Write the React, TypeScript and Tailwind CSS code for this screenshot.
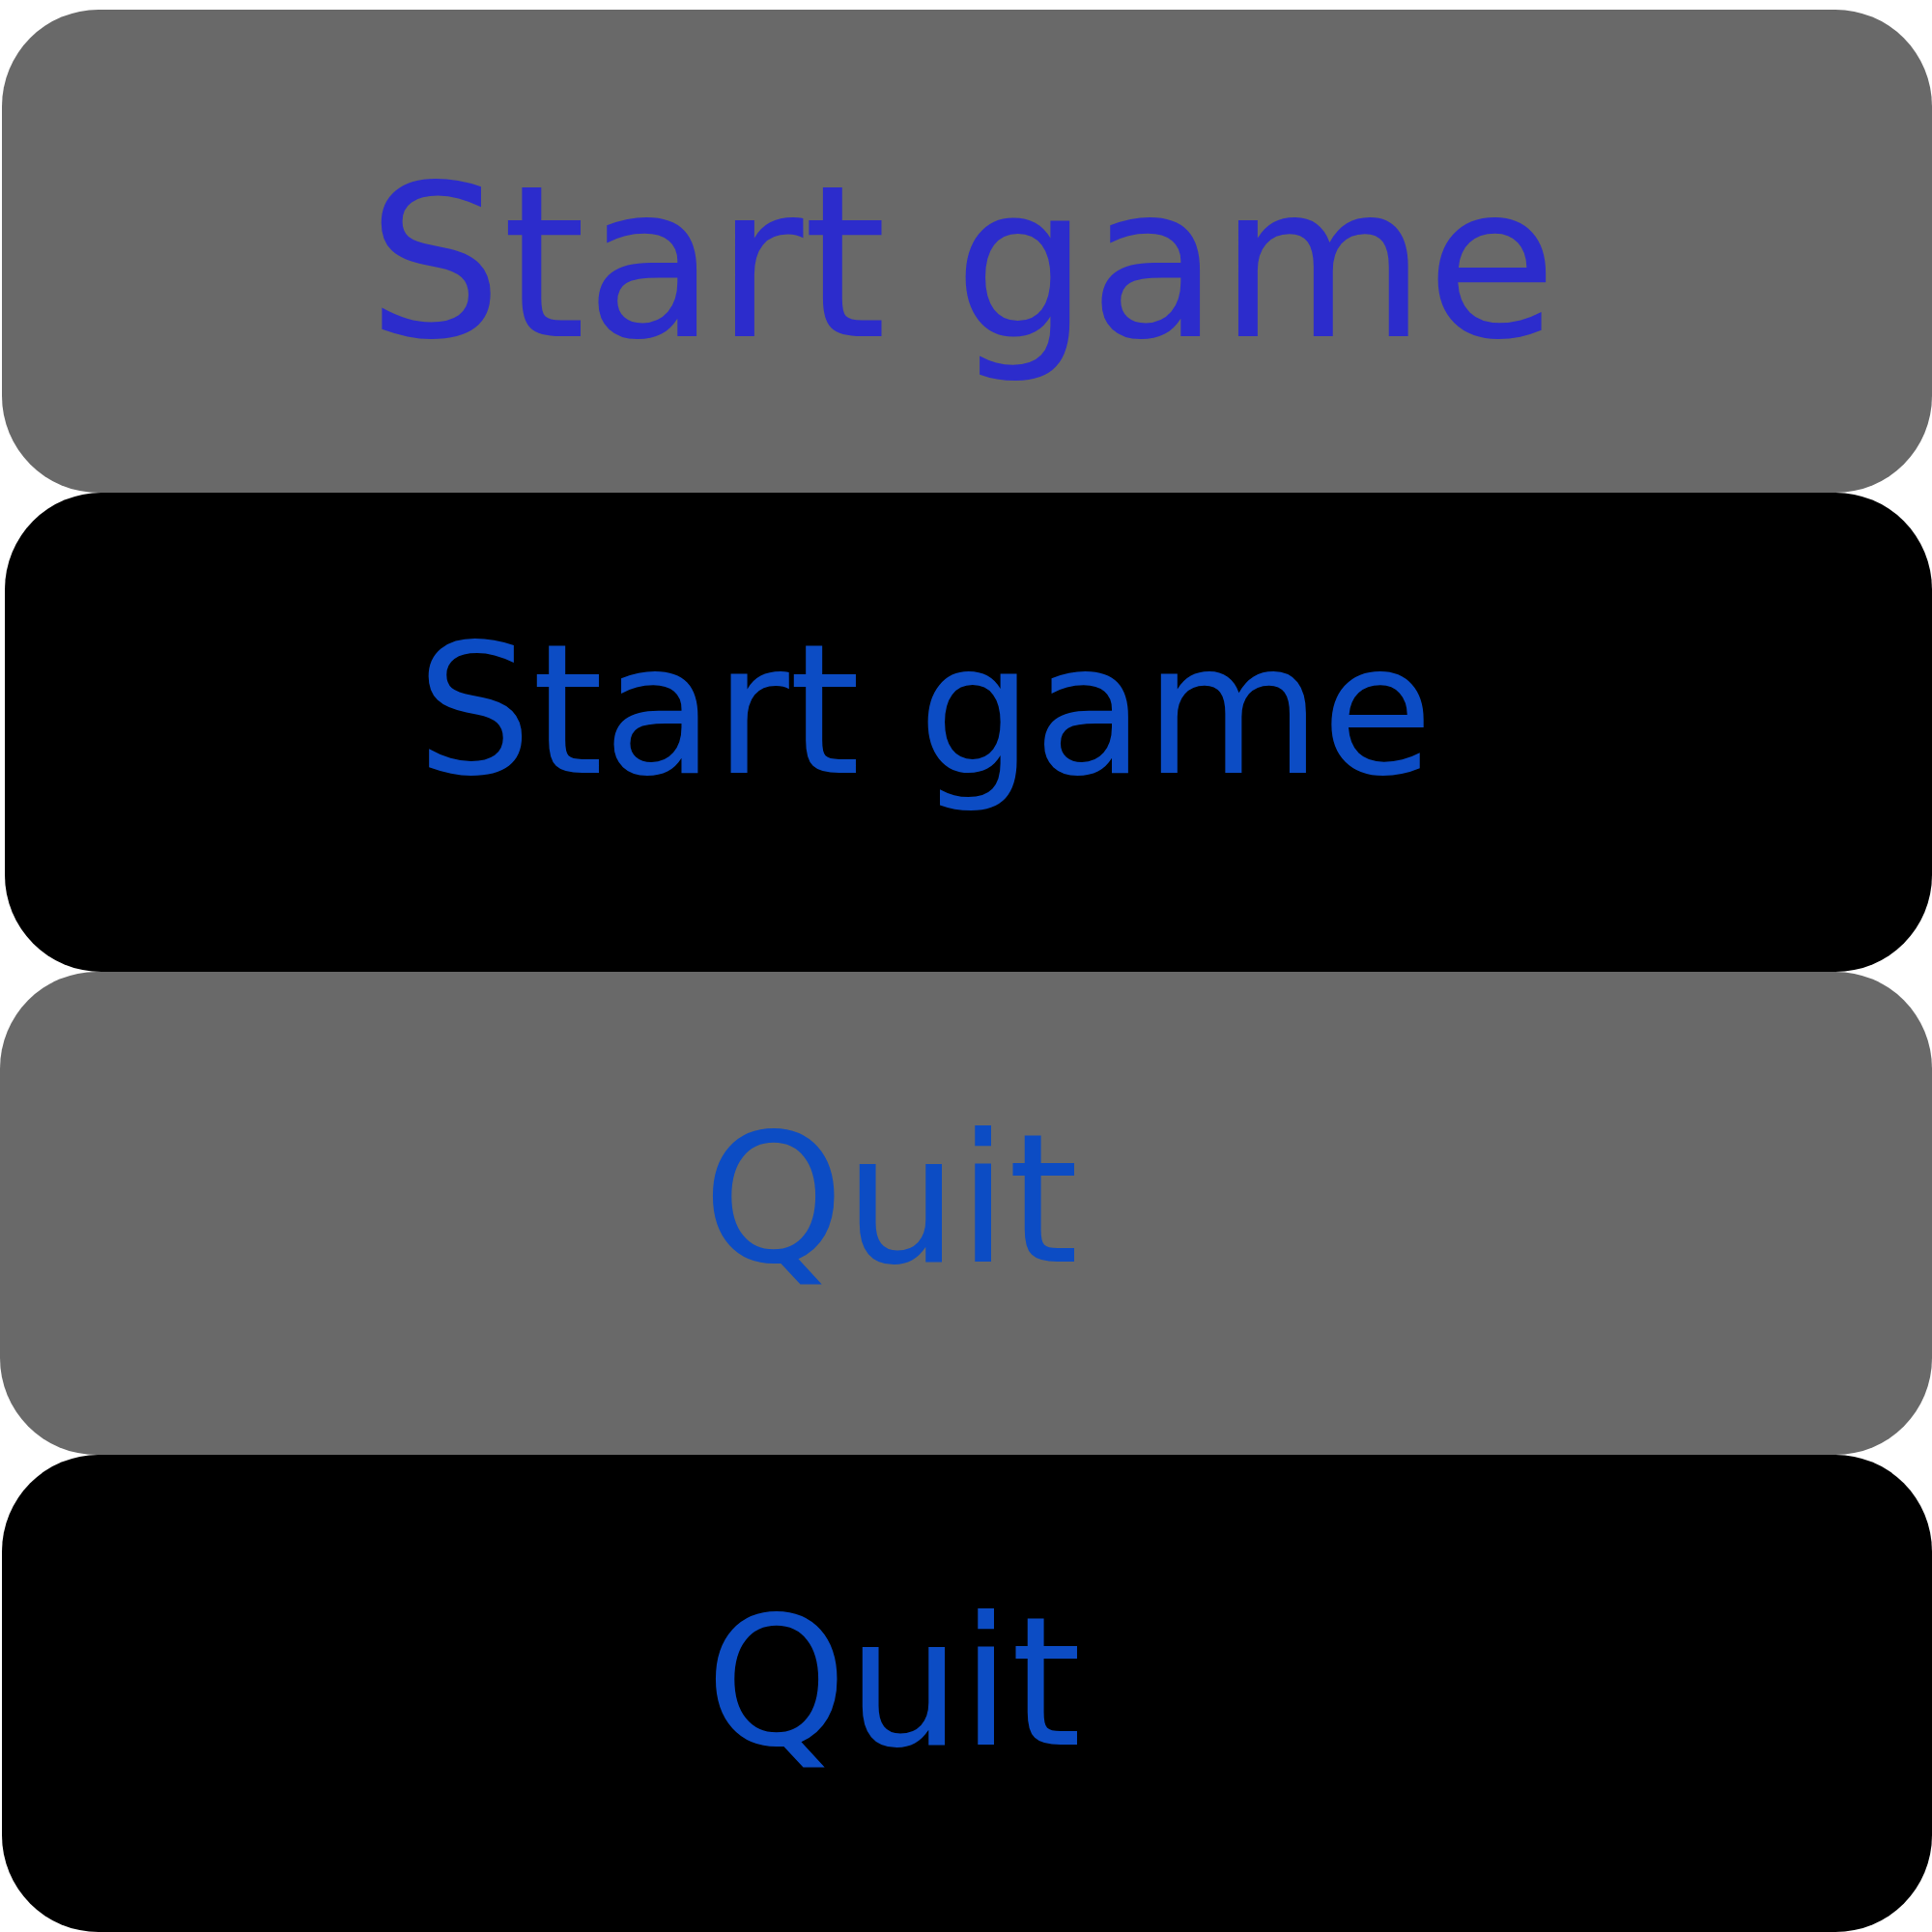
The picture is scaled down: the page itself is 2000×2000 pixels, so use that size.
import React from 'react';

const font = { fontFamily: '"DejaVu Sans", Verdana, sans-serif' };

export default function App() {
    return (
        <div className="w-[2000px] h-[2000px] overflow-hidden bg-white flex flex-col" style={font}>
            {/* Start game - hovered */}
            <button className="mt-[10px] ml-[2px] w-[1998px] h-[500px] shrink-0 rounded-[100px] bg-[#696969] flex items-center justify-center pt-[24px] pr-[10px]">
                <span className="text-[220px] leading-none text-[#2c2ccc]">Start game</span>
            </button>

            {/* Start game */}
            <button className="ml-[5px] w-[1995px] h-[496px] shrink-0 rounded-[100px] bg-black flex items-center justify-center pb-[46px] pr-[90px]">
                <span className="text-[188px] leading-none text-[#0c4cc4]">Start game</span>
            </button>

            {/* Quit - hovered */}
            <button className="w-[2000px] h-[500px] shrink-0 rounded-[100px] bg-[#696969] flex items-center justify-center pb-[28px] pr-[156px]">
                <span className="text-[186px] leading-none text-[#0c4cc4]">Quit</span>
            </button>

            {/* Quit */}
            <button className="ml-[2px] w-[1998px] h-[494px] shrink-0 rounded-[100px] bg-black flex items-center justify-center pb-[22px] pr-[152px]">
                <span className="text-[186px] leading-none text-[#0c4cc4]">Quit</span>
            </button>
        </div>
    );
}
